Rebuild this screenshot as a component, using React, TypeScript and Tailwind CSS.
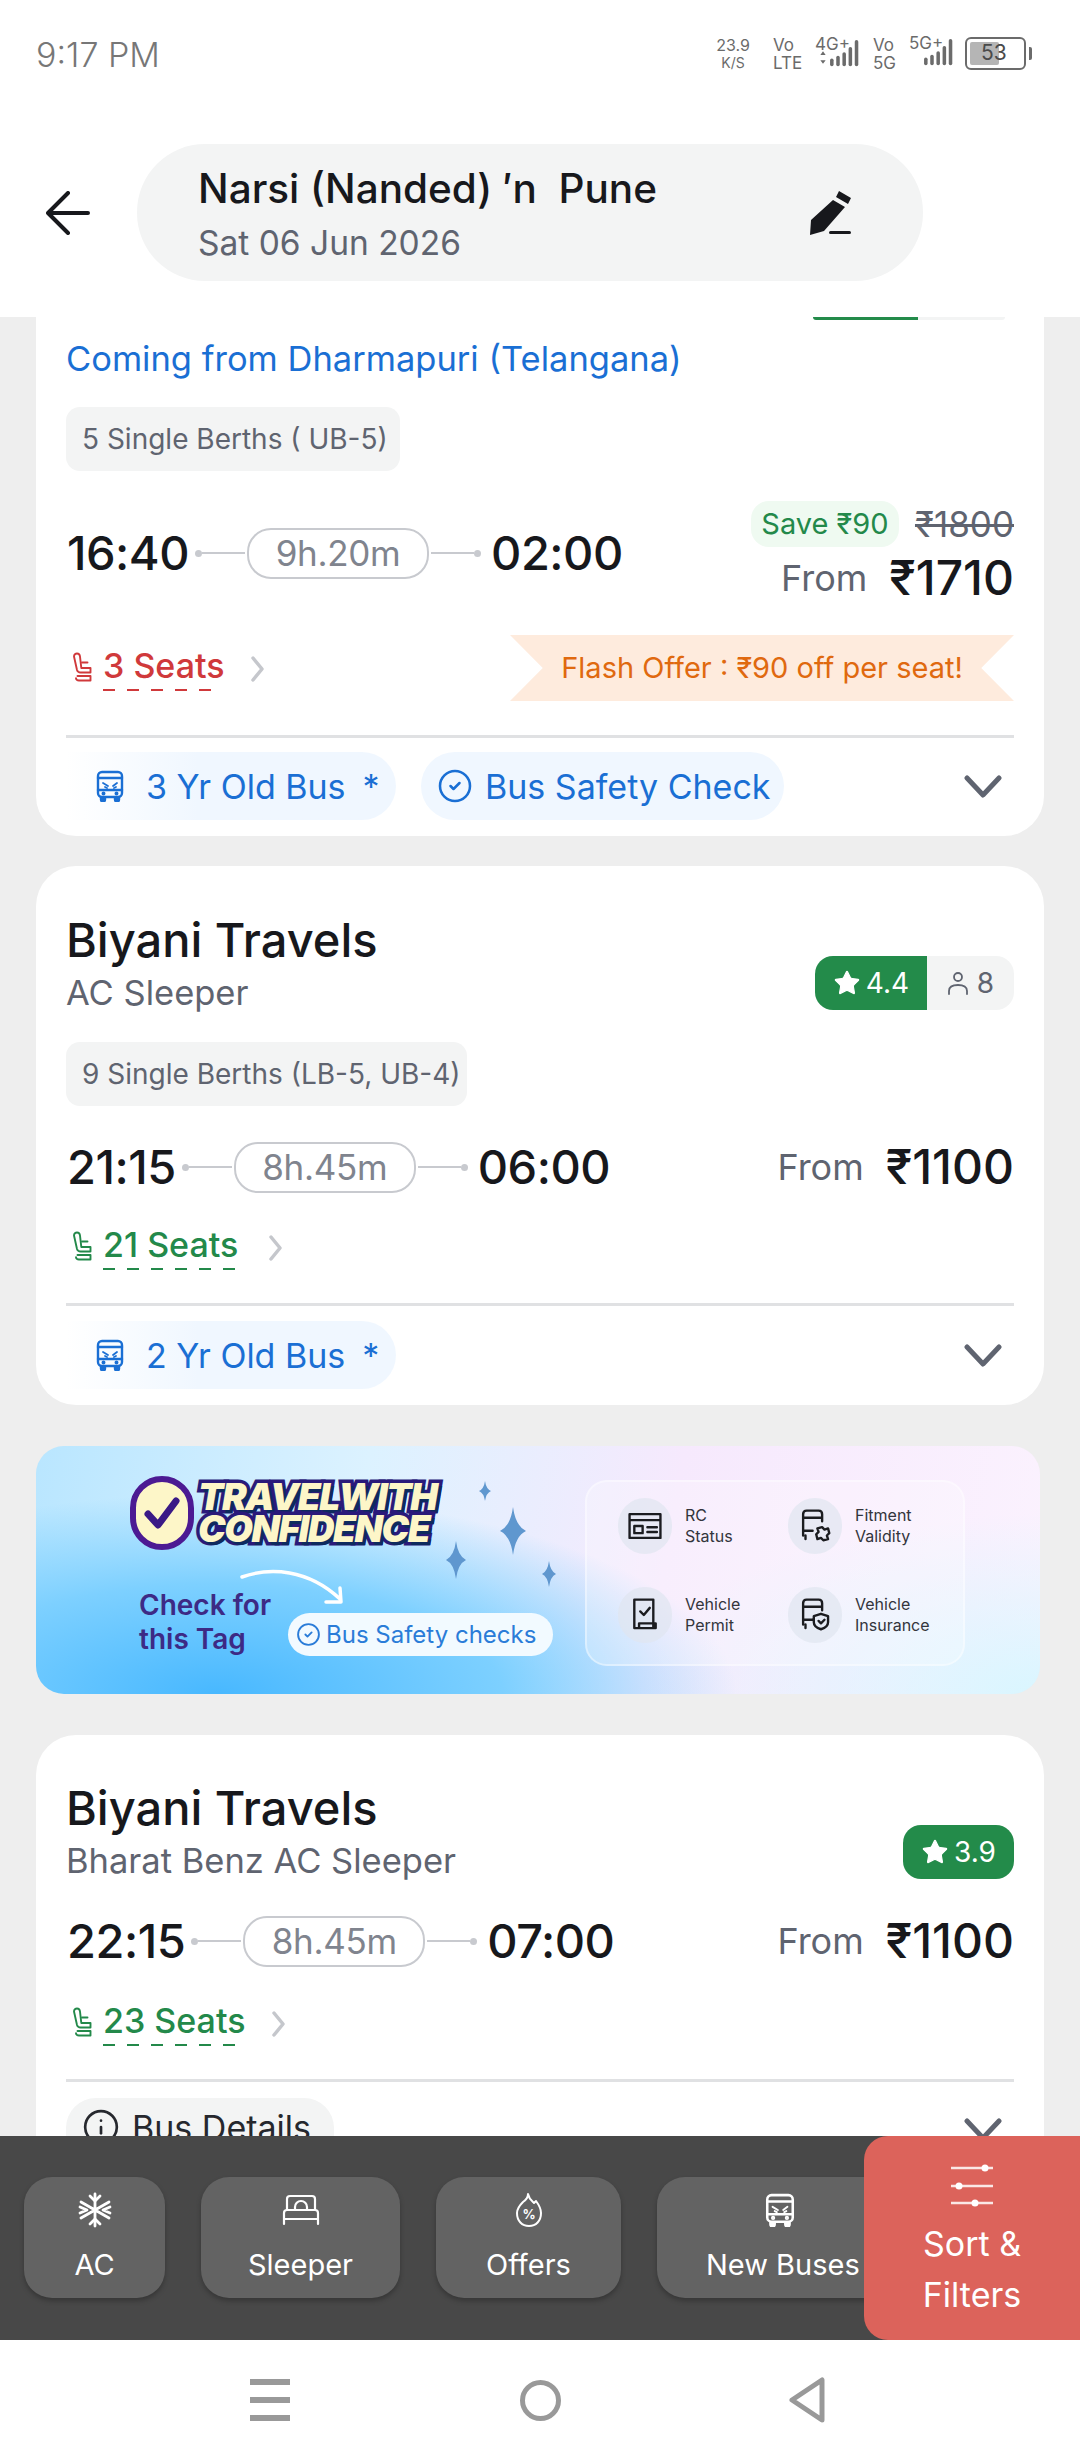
import React from 'react';
import { CircleCheck, Info, Star } from 'lucide-react';

const BusIcon: React.FC<{ className?: string }> = ({ className }) => (
  <svg viewBox="0 0 28 32" className={className} fill="none" stroke="currentColor" strokeWidth="2.4" strokeLinecap="round" strokeLinejoin="round">
    <rect x="2" y="2" width="24" height="25" rx="4" />
    <path d="M2 8h24M2 20h24" />
    <path d="M7 13l5 3M17 16l4-3M9 17l2 1M18 18l2-1" strokeWidth="1.8" />
    <circle cx="7.5" cy="23.5" r="0.8" fill="currentColor" />
    <circle cx="20.5" cy="23.5" r="0.8" fill="currentColor" />
    <path d="M5 28v1.5a1.5 1.5 0 0 0 4 0V28M19 28v1.5a1.5 1.5 0 0 0 4 0V28" fill="currentColor" />
  </svg>
);

const SeatIcon: React.FC<{ className?: string }> = ({ className }) => (
  <svg viewBox="0 0 22 32" className={className} fill="none" stroke="currentColor" strokeWidth="1.9" strokeLinecap="round" strokeLinejoin="round">
    <path d="M2 4.5C2 2.5 3.5 1.5 5 1.5s2.800 1 3 3l1.300 11.500h9.200v4.500H8.500C6.500 20.500 5.500 19.500 5 18L2 4.500" />
    <path d="M10 10.500h5.500M5.500 24h13v4.500H7c-2 0-3-1-3-2.200" />
  </svg>
);

const Chevron: React.FC = () => (
  <svg viewBox="0 0 38 24" className="w-[38px] h-[24px] text-[#5f6470]" fill="none" stroke="currentColor" strokeWidth="5" strokeLinecap="round" strokeLinejoin="round">
    <path d="M3 4l16 17L35 4" />
  </svg>
);

const Seats: React.FC<{ label: string; red?: boolean; dashWidth: string }> = ({ label, red, dashWidth }) => (
  <div className={`flex items-start ${red ? 'text-[#d0393b]' : 'text-[#23894a]'}`}>
    <SeatIcon className="w-[22px] h-[34px] mt-[6px] ml-[6px] mr-[9px] shrink-0" />
    <div>
      <div className="text-[34px] leading-[44px] font-medium -mt-[1px]">{label}</div>
      <div
        className={`h-[2px] mt-[1px] ${dashWidth} ${red
          ? 'bg-[repeating-linear-gradient(90deg,#d0393b_0_12px,transparent_12px_24px)]'
          : 'bg-[repeating-linear-gradient(90deg,#23894a_0_12px,transparent_12px_24px)]'}`}
      />
    </div>
    <svg viewBox="0 0 14 26" className="w-[14px] h-[26px] ml-[26px] mt-[11px] text-[#c5c7cc]" fill="none" stroke="currentColor" strokeWidth="3.500" strokeLinecap="round" strokeLinejoin="round">
      <path d="M2 2l9 11-9 11" />
    </svg>
  </div>
);

const Line: React.FC<{ end?: boolean }> = ({ end }) => (
  <div className={`flex items-center w-[50px] shrink-0 ${end ? 'flex-row-reverse' : ''}`}>
    <div className="w-[7px] h-[7px] rounded-full bg-[#c8cacf]" />
    <div className="h-[2px] flex-1 bg-[#c8cacf]" />
  </div>
);

const TimeRow: React.FC<{ from: string; to: string; dur: string }> = ({ from, to, dur }) => (
  <div className="flex items-center">
    <span className="text-[47px] leading-[52px] font-medium text-[#17181c] tracking-[-0.5px] ml-[1px]">{from}</span>
    <div className="ml-[6px]"><Line /></div>
    <div className="h-[51px] w-[182px] mx-[2px] rounded-[24px] border-2 border-[#c8cacf] flex items-center justify-center text-[35px] tracking-[-0.3px] text-[#80848e]">{dur}</div>
    <Line end />
    <span className="text-[47px] leading-[52px] font-medium text-[#17181c] tracking-[-0.5px] ml-[10px]">{to}</span>
  </div>
);

const Price: React.FC<{ value: string }> = ({ value }) => (
  <div className="flex items-center text-[#17181c]">
    <span className="text-[36px] leading-[50px] text-[#5f6470] mr-[22px]">From</span>
    <span className="text-[48px] leading-[50px] font-medium">{value}</span>
  </div>
);

const Rating: React.FC<{ value: string; count?: string }> = ({ value, count }) => (
  <div className="flex h-[54px] rounded-[18px] overflow-hidden">
    <div className={`bg-[#238b4a] text-white flex items-center justify-center gap-[5px] text-[28px] ${count ? 'w-[112px]' : 'w-[111px]'}`}>
      <Star className="w-[28px] h-[28px] fill-white" strokeWidth={1} />
      {value}
    </div>
    {count && (
      <div className="w-[87px] bg-[#f3f4f4] flex items-center justify-center gap-[8px] text-[28px] text-[#5f6470]">
        <svg viewBox="0 0 22 24" className="w-[22px] h-[24px]" fill="none" stroke="currentColor" strokeWidth="1.800" strokeLinecap="round">
          <circle cx="11" cy="6" r="4" />
          <path d="M2 23v-3c0-4 3-6 9-6s9 2 9 6v3" />
        </svg>
        {count}
      </div>
    )}
  </div>
);

const BerthChip: React.FC<{ label: string; width: string }> = ({ label, width }) => (
  <div className={`${width} h-[64px] rounded-[14px] bg-[#f3f4f4] pl-[16px] flex items-center text-[28px] text-[#5f6470] whitespace-nowrap`}>{label}</div>
);

const AgeChip: React.FC<{ label: string }> = ({ label }) => (
  <div className="w-[330px] h-[68px] rounded-r-[34px] bg-gradient-to-r from-white via-[#f0f7ff] via-40% to-[#f0f7ff] pl-[30px] flex items-center text-[34px] text-[#1a6fd4] whitespace-pre">
    <BusIcon className="w-[28px] h-[32px] mr-[22px]" />
    {label}
  </div>
);

const Divider: React.FC<{ className: string }> = ({ className }) => (
  <div className={`h-[3px] bg-[#e0e1e3] ${className}`} />
);

const Title: React.FC<{ name: string; type: string }> = ({ name, type }) => (
  <div>
    <div className="text-[47px] leading-[56px] font-medium text-[#17181c]">{name}</div>
    <div className="text-[34.500px] leading-[44px] mt-[3px] text-[#5f6470]">{type}</div>
  </div>
);

const Sparkle: React.FC<{ cx: number; cy: number; rx: number; ry: number }> = ({ cx, cy, rx, ry }) => (
  <path d={`M${cx} ${cy - ry}Q${cx + rx * 0.2} ${cy - ry * 0.2} ${cx + rx} ${cy}Q${cx + rx * 0.2} ${cy + ry * 0.2} ${cx} ${cy + ry}Q${cx - rx * 0.2} ${cy + ry * 0.2} ${cx - rx} ${cy}Q${cx - rx * 0.2} ${cy - ry * 0.2} ${cx} ${cy - ry}z`} />
);

const Banner: React.FC = () => (
  <div className="relative mx-[36px] w-[1004px] mt-[41px] h-[248px] rounded-[28px] overflow-hidden flex bg-[radial-gradient(ellipse_520px_200px_at_18%_100%,#48b8ff_0%,#7dd0ff_55%,transparent_100%),radial-gradient(ellipse_400px_180px_at_100%_100%,#d9f6ff_0%,transparent_100%),linear-gradient(100deg,#b9e6ff_0%,#dcf2ff_32%,#f6e9fd_62%,#fbf2fe_100%)]">
    <div className="pl-[94px] w-[550px] shrink-0">
      <div className="flex items-center mt-[30px]">
        <div className="w-[64px] h-[74px] rounded-full bg-[#fdf6c8] border-[6px] border-[#4c1a93] flex items-center justify-center shrink-0 z-10">
          <svg viewBox="0 0 40 40" className="w-[40px] h-[40px]" fill="none" stroke="#3a1a86" strokeWidth="7" strokeLinecap="round" strokeLinejoin="round">
            <path d="M6 21l10 11L34 8" />
          </svg>
        </div>
        <div className="ml-[4px] font-['Inter',sans-serif] italic font-black text-[#fdf6c8] text-[37px] leading-[32px] tracking-[-1.500px] [word-spacing:-6px] [-webkit-text-stroke:7px_#2a1a7a] [paint-order:stroke_fill] [text-shadow:3px_3px_0_#0e2a5e]">
          <div>TRAVEL WITH</div>
          <div>CONFIDENCE</div>
        </div>
      </div>
      <div className="flex items-end mt-[38px] ml-[9px]">
        <div className="w-[149px] text-[28px] leading-[34px] font-semibold text-[#3d2a85] pb-[2px]">Check for this Tag</div>
        <div className="relative w-[265px] h-[43px] rounded-[22px] bg-[#f2faff] flex items-center pl-[8px] text-[24px] text-[#2a7cd8] whitespace-nowrap mb-[2px]">
          <svg viewBox="0 0 110 36" className="absolute -top-[44px] -left-[48px] w-[110px] h-[36px]" fill="none" stroke="white" strokeWidth="3.500" strokeLinecap="round" strokeLinejoin="round">
            <path d="M2 8C30-2 68 0 100 30M86 33l15 0-1-14" />
          </svg>
          <CircleCheck className="w-[25px] h-[25px] mr-[5px]" strokeWidth={1.800} />
          Bus Safety checks
        </div>
      </div>
    </div>
    <svg viewBox="0 0 130 130" className="absolute left-[400px] top-[30px] w-[130px] h-[130px]" fill="#5f97cf">
      <Sparkle cx={49} cy={15} rx={6} ry={10} />
      <Sparkle cx={77} cy={55} rx={13} ry={24} />
      <Sparkle cx={20} cy={84} rx={10} ry={19} />
      <Sparkle cx={113} cy={98} rx={7} ry={13} />
    </svg>
    <div className="mt-[34px] h-[186px] w-[380px] ml-[-1px] rounded-[22px] border-2 border-white/40 bg-white/25 grid grid-cols-[170px_1fr] pl-[31px] pt-[16px] content-start gap-y-[33px]">
      <PerkItem top="RC" bottom="Status" icon={<path d="M3 6h26v20H3zM3 11h26M7 16h7v6H7zM18 17h8M18 21h8" />} />
      <PerkItem top="Fitment" bottom="Validity" icon={<path d="M6 24V6q0-3 3-3h10q3 0 3 3v6M6 9h16M6 20h8M8 24v3M22 17l2 2 3-1 1 4-2 2 1 3-4 1-2-2-3 1-1-4 2-2-1-3z" />} />
      <PerkItem top="Vehicle" bottom="Permit" icon={<path d="M7 3h16v23M7 3v24h18v-4H11v4M12 13l3 3 5-6" />} />
      <PerkItem top="Vehicle" bottom="Insurance" icon={<path d="M6 24V6q0-3 3-3h10q3 0 3 3v6M6 9h16M6 20h8M8 24v3M21 15l6 2v5c0 3-3 5-6 6-3-1-6-3-6-6v-5zM19 21l2 2 3-3" />} />
    </div>
  </div>
);

const PerkItem: React.FC<{ top: string; bottom: string; icon: React.ReactNode }> = ({ top, bottom, icon }) => (
  <div className="flex items-center h-[56px]">
    <div className="w-[54px] h-[56px] rounded-full bg-[#dfe5f0]/70 flex items-center justify-center shrink-0 mr-[13px]">
      <svg viewBox="0 0 32 32" className="w-[38px] h-[38px]" fill="none" stroke="#1b1c20" strokeWidth="2" strokeLinecap="round" strokeLinejoin="round">{icon}</svg>
    </div>
    <div className="text-[16px] leading-[21px] text-[#33353c]">
      <div>{top}</div>
      <div>{bottom}</div>
    </div>
  </div>
);

const FilterChip: React.FC<{ label: string; width: string; icon: React.ReactNode }> = ({ label, width, icon }) => (
  <div className={`${width} h-[121px] shrink-0 rounded-[28px] bg-[#636363] shadow-[0_3px_5px_rgba(0,0,0,0.25)] flex flex-col text-white`}>
    <div className="h-[36px] mt-[15px] flex items-center justify-center">{icon}</div>
    <div className="text-[29px] leading-[40px] mt-[17px] whitespace-nowrap">{label}</div>
  </div>
);

const StatusBar: React.FC = () => (
  <div className="h-[100px] flex items-start pl-[36px] pr-[48px] pt-[33px] text-[#6b6b6b]">
    <span className="text-[34px] leading-[44px] font-light text-[#777777]">9:17 PM</span>
    <div className="ml-auto flex items-start mt-[3px] text-[#6b6b6b]">
      <div className="w-[40px] text-center text-[16px] leading-[18px]"><div>23.9</div><div className="text-[14px]">K/S</div></div>
      <div className="w-[30px] ml-[20px] text-[17px] leading-[18px]"><div>Vo</div><div>LTE</div></div>
      <div className="ml-[12px] w-[48px]">
        <div className="text-[17px] leading-[16px]">4G+</div>
        <SignalBars arrows />
      </div>
      <div className="w-[26px] ml-[10px] text-[17px] leading-[18px]"><div>Vo</div><div>5G</div></div>
      <div className="ml-[10px] w-[46px]">
        <div className="text-[17px] leading-[16px] -mt-[1px]">5G+</div>
        <SignalBars />
      </div>
      <div className="ml-[10px] mt-[1px] flex items-center">
        <div className="relative w-[61px] h-[33px] rounded-[6px] border-[2.500px] border-[#6b6b6b] p-[3px]">
          <div className="h-full w-[29px] rounded-[2px] bg-[#b5b5b5]" />
          <span className="absolute left-[14px] top-[2px] text-[21px] leading-[24px] text-[#4a4a4a]">53</span>
        </div>
        <div className="w-[3px] h-[13px] ml-[3px] rounded-r-[2px] bg-[#6b6b6b]" />
      </div>
    </div>
  </div>
);

const SignalBars: React.FC<{ arrows?: boolean }> = ({ arrows }) => (
  <svg viewBox="0 0 46 34" className="w-[46px] h-[30px] -mt-[13px]" fill="#6b6b6b">
    {arrows && <path d="M3 18l3-4 3 4zM3 24l3 4 3-4z" />}
    <rect x="14" y="22" width="4" height="9" rx="2" />
    <rect x="21" y="19" width="4" height="12" rx="2" />
    <rect x="28" y="15" width="4" height="16" rx="2" />
    <rect x="35" y="9" width="4" height="22" rx="2" />
    <rect x="42" y="1" width="4" height="30" rx="2" />
  </svg>
);

const App: React.FC = () => {
  return (
    <div className="w-[1080px] h-[2460px] flex flex-col overflow-hidden bg-white font-['Inter',sans-serif]">
      <div className="h-[317px] shrink-0 bg-white z-10">
        <StatusBar />
        <div className="flex items-center mt-[44px]">
          <svg viewBox="0 0 44 44" className="w-[44px] h-[44px] ml-[46px] mr-[47px] text-[#17181c]" fill="none" stroke="currentColor" strokeWidth="4" strokeLinecap="round" strokeLinejoin="round">
            <path d="M42 22H3M22 2L2 22l20 20" />
          </svg>
          <div className="w-[786px] h-[137px] rounded-[68px] bg-[#f3f4f4] pl-[61px] pr-[70px] flex items-center">
            <div className="mt-[4px]">
              <div className="text-[40.500px] leading-[50px] font-medium text-[#17181c] whitespace-pre">Narsi (Nanded) ′n  Pune</div>
              <div className="text-[33.500px] leading-[44px] mt-[7px] text-[#5f6470]">Sat 06 Jun 2026</div>
            </div>
            <svg viewBox="0 0 42 44" className="ml-auto w-[44px] h-[44px] text-[#17181c]" fill="currentColor">
              <path d="M29 0l12 7-3 6-12-7zM23 9l12 7L14 40 0 44l1-15z" />
              <rect x="19" y="40" width="22" height="3" rx="1.500" />
            </svg>
          </div>
        </div>
      </div>

      <div className="h-[1819px] shrink-0 overflow-hidden bg-[#eeeeee] relative">
        {/* first card is already scrolled under the header */}
        <div className="mx-[36px] w-[1008px] bg-white rounded-b-[40px] px-[30px] pb-[16px]">
          <div className="h-[3px] flex justify-end pr-[9px]">
            <div className="w-[105px] bg-[#238b4a] rounded-bl-[6px]" />
            <div className="w-[87px] bg-[#f3f4f4] rounded-br-[6px]" />
          </div>
          <div className="text-[34.500px] leading-[44px] text-[#1a6fd4] mt-[17px]">Coming from Dharmapuri (Telangana)</div>
          <div className="mt-[26px]"><BerthChip label="5 Single Berths ( UB-5)" width="w-[334px]" /></div>
          <div className="flex items-center justify-between mt-[30px]">
            <div className="mt-[2px]"><TimeRow from="16:40" to="02:00" dur="9h.20m" /></div>
            <div className="flex flex-col items-end">
              <div className="flex items-center h-[46px] mb-[6px]">
                <div className="h-[46px] w-[148px] rounded-[18px] bg-[#effaf1] flex items-center justify-center text-[29px] text-[#23894a]">Save ₹90</div>
                <div className="text-[35px] ml-[16px] text-[#5f6470] line-through">₹1800</div>
              </div>
              <Price value="₹1710" />
            </div>
          </div>
          <div className="flex items-center justify-between mt-[32px] h-[66px]">
            <Seats label="3 Seats" red dashWidth="w-[120px]" />
            <div className="w-[504px] h-[66px] bg-[#feebdd] [clip-path:polygon(0_0,100%_0,93.500%_50%,100%_100%,0_100%,6.500%_50%)] flex items-center justify-center text-[29px] text-[#e0690f] whitespace-nowrap">Flash Offer : ₹90 off per seat!</div>
          </div>
          <Divider className="mt-[34px]" />
          <div className="flex items-center mt-[14px]">
            <AgeChip label={'3 Yr Old Bus\u2002*'} />
            <div className="w-[363px] h-[68px] ml-[25px] rounded-[34px] bg-[#f0f7ff] pl-[16px] flex items-center text-[34px] text-[#1a6fd4] whitespace-nowrap">
              <CircleCheck className="w-[36px] h-[36px] mr-[12px]" strokeWidth={1.700} />
              Bus Safety Check
            </div>
            <div className="ml-auto mr-[12px]"><Chevron /></div>
          </div>
        </div>

        <div className="mx-[36px] w-[1008px] mt-[30px] bg-white rounded-[40px] px-[30px] pt-[46px] pb-[16px]">
          <div className="flex justify-between items-start">
            <Title name="Biyani Travels" type="AC Sleeper" />
            <div className="mt-[44px]"><Rating value="4.4" count="8" /></div>
          </div>
          <div className="mt-[27px]"><BerthChip label="9 Single Berths (LB-5, UB-4)" width="w-[401px]" /></div>
          <div className="flex items-center justify-between mt-[35px]">
            <TimeRow from="21:15" to="06:00" dur="8h.45m" />
            <Price value="₹1100" />
          </div>
          <div className="mt-[31px]"><Seats label="21 Seats" dashWidth="w-[140px]" /></div>
          <Divider className="mt-[33px]" />
          <div className="flex items-center mt-[15px]">
            <AgeChip label={'2 Yr Old Bus\u2002*'} />
            <div className="ml-auto mr-[12px]"><Chevron /></div>
          </div>
        </div>

        <Banner />

        <div className="mx-[36px] w-[1008px] mt-[41px] bg-white rounded-t-[40px] px-[30px] pt-[45px] pb-[16px]">
          <div className="flex justify-between items-start">
            <Title name="Biyani Travels" type="Bharat Benz AC Sleeper" />
            <div className="mt-[45px]"><Rating value="3.9" /></div>
          </div>
          <div className="flex items-center justify-between mt-[32px]">
            <TimeRow from="22:15" to="07:00" dur="8h.45m" />
            <Price value="₹1100" />
          </div>
          <div className="mt-[33px]"><Seats label="23 Seats" dashWidth="w-[140px]" /></div>
          <Divider className="mt-[33px]" />
          <div className="flex items-center mt-[16px]">
            <div className="w-[268px] h-[68px] rounded-[30px] bg-[#f3f4f4] pl-[16px] pb-[10px] flex items-center text-[34px] text-[#26282e] whitespace-nowrap">
              <Info className="w-[38px] h-[38px] mr-[12px]" strokeWidth={1.700} />
              Bus Details
            </div>
            <div className="ml-auto mr-[12px] -mt-[6px]"><Chevron /></div>
          </div>
        </div>
      </div>

      <div className="h-[204px] shrink-0 bg-[#484848] relative flex items-start gap-[36px] pl-[24px] pt-[41px] overflow-hidden">
        <FilterChip
          label="AC"
          width="w-[141px] items-center"
          icon={
            <svg viewBox="0 0 36 36" className="w-[36px] h-[36px]" fill="none" stroke="currentColor" strokeWidth="2.800" strokeLinecap="round" strokeLinejoin="round">
              <path d="M18 2v32M4 10l28 16M4 26l28-16" />
              <path d="M13 4l5 5 5-5M13 32l5-5 5 5M3 15l7 3-7 3M33 15l-7 3 7 3" />
            </svg>
          }
        />
        <FilterChip
          label="Sleeper"
          width="w-[199px] items-center"
          icon={
            <svg viewBox="0 0 38 32" className="w-[38px] h-[32px]" fill="none" stroke="currentColor" strokeWidth="2.200" strokeLinecap="round" strokeLinejoin="round">
              <path d="M5 15V5q0-3 3-3h22q3 0 3 3v10M2 30V19q0-3 3-3h28q3 0 3 3v11M2 25h34M13 15v-2a6 6 0 0 1 12 0v2" />
            </svg>
          }
        />
        <FilterChip
          label="Offers"
          width="w-[185px] items-center"
          icon={
            <svg viewBox="0 0 28 36" className="w-[28px] h-[36px]" fill="none" stroke="currentColor" strokeWidth="2" strokeLinecap="round" strokeLinejoin="round">
              <path d="M13 2c1 5 4 7 6 9l2-2c3 4 5 8 5 12 0 8-5 13-12 13S2 29 2 21c0-5 3-8 6-11 3-2 5-5 5-8z" />
              <text x="14" y="27" textAnchor="middle" fontSize="13" fontWeight="700" fill="currentColor" stroke="none">%</text>
            </svg>
          }
        />
        <FilterChip label="New Buses" width="w-[300px] items-start pl-[49px]" icon={<BusIcon className="w-[30px] h-[34px] ml-[59px]" />} />
        {/* sort button sits over the chip row */}
        <div className="absolute right-0 top-0 w-[216px] h-[204px] rounded-tl-[24px] rounded-bl-[24px] bg-[#dc635b] flex flex-col items-center text-white">
          <svg viewBox="0 0 44 46" className="w-[44px] h-[46px] mt-[26px]" stroke="currentColor" strokeWidth="2.500" fill="currentColor">
            <path d="M1 6h42M1 24h42M1 41h42" strokeOpacity="0.850" />
            <circle cx="35" cy="6" r="3.500" stroke="none" />
            <circle cx="9" cy="24" r="3.500" stroke="none" />
            <circle cx="25" cy="41" r="3.500" stroke="none" />
          </svg>
          <div className="text-[34px] leading-[51px] text-center mt-[10px]">Sort &amp;<br />Filters</div>
        </div>
      </div>

      <div className="flex-1 bg-white relative flex items-center">
        <div className="w-[40px] ml-[250px] flex flex-col gap-[12px]">
          <div className="h-[6px] bg-[#999999]" />
          <div className="h-[6px] bg-[#999999]" />
          <div className="h-[6px] bg-[#999999]" />
        </div>
        <div className="w-[41px] h-[41px] ml-[230px] rounded-full border-[5px] border-[#999999]" />
        <svg viewBox="0 0 36 46" className="w-[36px] h-[46px] ml-[228px] text-[#999999]" fill="none" stroke="currentColor" strokeWidth="5" strokeLinejoin="round">
          <path d="M33 3v40L3 23z" />
        </svg>
      </div>
    </div>
  );
};

export default App;
